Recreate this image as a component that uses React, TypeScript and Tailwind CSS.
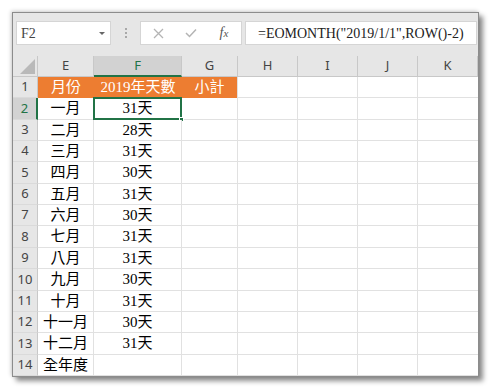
const cols = [
  { key: "E", w: "w-[56px]" },
  { key: "F", w: "w-[88px]" },
  { key: "G", w: "w-[56px]" },
  { key: "H", w: "w-[60px]" },
  { key: "I", w: "w-[60px]" },
  { key: "J", w: "w-[60px]" },
  { key: "K", w: "w-[60px]" },
];

const months = [
  "一月", "二月", "三月", "四月", "五月", "六月",
  "七月", "八月", "九月", "十月", "十一月", "十二月",
];
const days = [31, 28, 31, 30, 31, 30, 31, 31, 30, 31, 30, 31];

// heights alternate so 14 rows land on the same pixels as the screenshot
const tallRows = [2, 5, 8, 10, 13];

const cellFont = "font-['Liberation_Serif','Noto_Sans_CJK_TC',serif] text-[15px]";
const headFont = "font-['Noto_Sans',sans-serif] text-[13px]";

const rows = Array.from({ length: 14 }, (_, i) => {
  const n = i + 1;
  if (n === 1) return { n, e: "月份", f: "2019年天數", g: "小計", header: true };
  if (n === 14) return { n, e: "全年度", f: "", g: "", header: false };
  return { n, e: months[i - 1], f: `${days[i - 1]}天`, g: "", header: false };
});

const Toolbar = () => (
  <div className="flex items-start h-[43px] pt-[8px] pl-[3px]">
    <div className="relative w-[95px] h-[24px] bg-white border border-[#d5d5d5] flex items-center pl-[4px]">
      <span className="font-['Liberation_Serif',serif] text-[14px] text-[#444]">F2</span>
      <span className="absolute right-[5px] top-[10px] w-0 h-0 border-l-[3px] border-r-[3px] border-t-[3px] border-l-transparent border-r-transparent border-t-[#666]" />
    </div>
    <div className="w-[29px] h-[24px] flex flex-col items-center justify-center gap-[2px]">
      <span className="w-[2px] h-[2px] bg-[#a8a8a8]" />
      <span className="w-[2px] h-[2px] bg-[#a8a8a8]" />
      <span className="w-[2px] h-[2px] bg-[#a8a8a8]" />
    </div>
    <div className="w-[102px] h-[24px] bg-white border border-[#d5d5d5] flex items-center">
      <div className="w-[34px] flex justify-center">
        <svg width="11" height="11" viewBox="0 0 11 11">
          <path d="M1 1 L10 10 M10 1 L1 10" stroke="#b4b4b4" strokeWidth="1.3" fill="none" />
        </svg>
      </div>
      <div className="w-[32px] flex justify-center">
        <svg width="12" height="10" viewBox="0 0 12 10">
          <path d="M1 5 L4.5 8.5 L11 1.5" stroke="#b4b4b4" strokeWidth="1.5" fill="none" />
        </svg>
      </div>
      <div className="flex-1 flex justify-center">
        <span className="font-['Liberation_Serif',serif] italic text-[14px] text-[#555] leading-none">
          f<span className="text-[11px]">x</span>
        </span>
      </div>
    </div>
    <div className="ml-[3px] w-[232px] h-[24px] bg-white border border-[#d5d5d5] flex items-center pl-[12px]">
      <span className="font-['Liberation_Serif',serif] text-[14px] text-[#222] whitespace-nowrap">
        =EOMONTH("2019/1/1",ROW()-2)
      </span>
    </div>
  </div>
);

const ColumnHeader = () => (
  <div className={`flex h-[21px] ${headFont}`}>
    <div className="relative w-[25px] border-r border-b border-[#c8c8c8]">
      <svg className="absolute right-[2px] bottom-[2px]" width="15" height="15" viewBox="0 0 15 15">
        <path d="M15 0 L15 15 L0 15 Z" fill="#b9b9b9" />
      </svg>
    </div>
    {cols.map((c) =>
      c.key === "F" ? (
        <div
          key={c.key}
          className={`${c.w} flex items-center justify-center bg-[#d2d2d2] text-[#217346] border-r border-[#c8c8c8] border-b-2 border-b-[#217346]`}
        >
          {c.key}
        </div>
      ) : (
        <div
          key={c.key}
          className={`${c.w} flex items-center justify-center text-[#444] border-r border-b border-[#c8c8c8]`}
        >
          {c.key}
        </div>
      )
    )}
  </div>
);

export default function App() {
  return (
    <div className="w-[491px] h-[390px] bg-white pl-[12px] pt-[12px] overflow-hidden">
      <div className="w-[467px] border border-[#8c8c8c] bg-[#e6e6e6] overflow-hidden shadow-[4px_4px_5px_rgba(0,0,0,0.45),-1px_-1px_4px_rgba(0,0,0,0.2)]">
        <Toolbar />
        <ColumnHeader />
        {rows.map((r) => {
          const h = tallRows.includes(r.n) ? "h-[22px]" : "h-[21px]";
          const selected = r.n === 2;
          return (
            <div key={r.n} className={`flex ${h}`}>
              {selected ? (
                <div className={`w-[25px] flex items-center justify-center ${headFont} bg-[#d2d2d2] text-[#217346] border-b border-[#dadada] border-r-2 border-r-[#217346]`}>
                  {r.n}
                </div>
              ) : (
                <div className={`w-[25px] flex items-center justify-center ${headFont} text-[#444] border-b border-[#dadada] border-r border-r-[#c8c8c8]`}>
                  {r.n}
                </div>
              )}
              {r.header ? (
                <>
                  <div className={`w-[56px] flex items-center justify-center bg-[#ed7d31] text-white ${cellFont}`}>{r.e}</div>
                  <div className={`w-[88px] flex items-center justify-center bg-[#ed7d31] text-white ${cellFont}`}>{r.f}</div>
                  <div className={`w-[56px] flex items-center justify-center bg-[#ed7d31] text-white border-r border-[#e1e1e1] ${cellFont}`}>{r.g}</div>
                </>
              ) : (
                <>
                  <div className={`w-[56px] flex items-center justify-center bg-white text-black border-r border-b border-[#e1e1e1] ${cellFont}`}>{r.e}</div>
                  <div className={`relative w-[88px] flex items-center justify-center bg-white text-black border-r border-b border-[#e1e1e1] ${cellFont}`}>
                    {r.f}
                    {selected && (
                      <>
                        <div className="absolute -left-px -top-px -right-px -bottom-px border-2 border-[#217346]" />
                        <div className="absolute -right-[3px] -bottom-[3px] w-[5px] h-[5px] bg-[#217346] border border-white" />
                      </>
                    )}
                  </div>
                  <div className="w-[56px] bg-white border-r border-b border-[#e1e1e1]" />
                </>
              )}
              <div className="w-[60px] bg-white border-r border-b border-[#e1e1e1]" />
              <div className="w-[60px] bg-white border-r border-b border-[#e1e1e1]" />
              <div className="w-[60px] bg-white border-r border-b border-[#e1e1e1]" />
              <div className="w-[60px] bg-white border-b border-[#e1e1e1]" />
            </div>
          );
        })}
      </div>
    </div>
  );
}
